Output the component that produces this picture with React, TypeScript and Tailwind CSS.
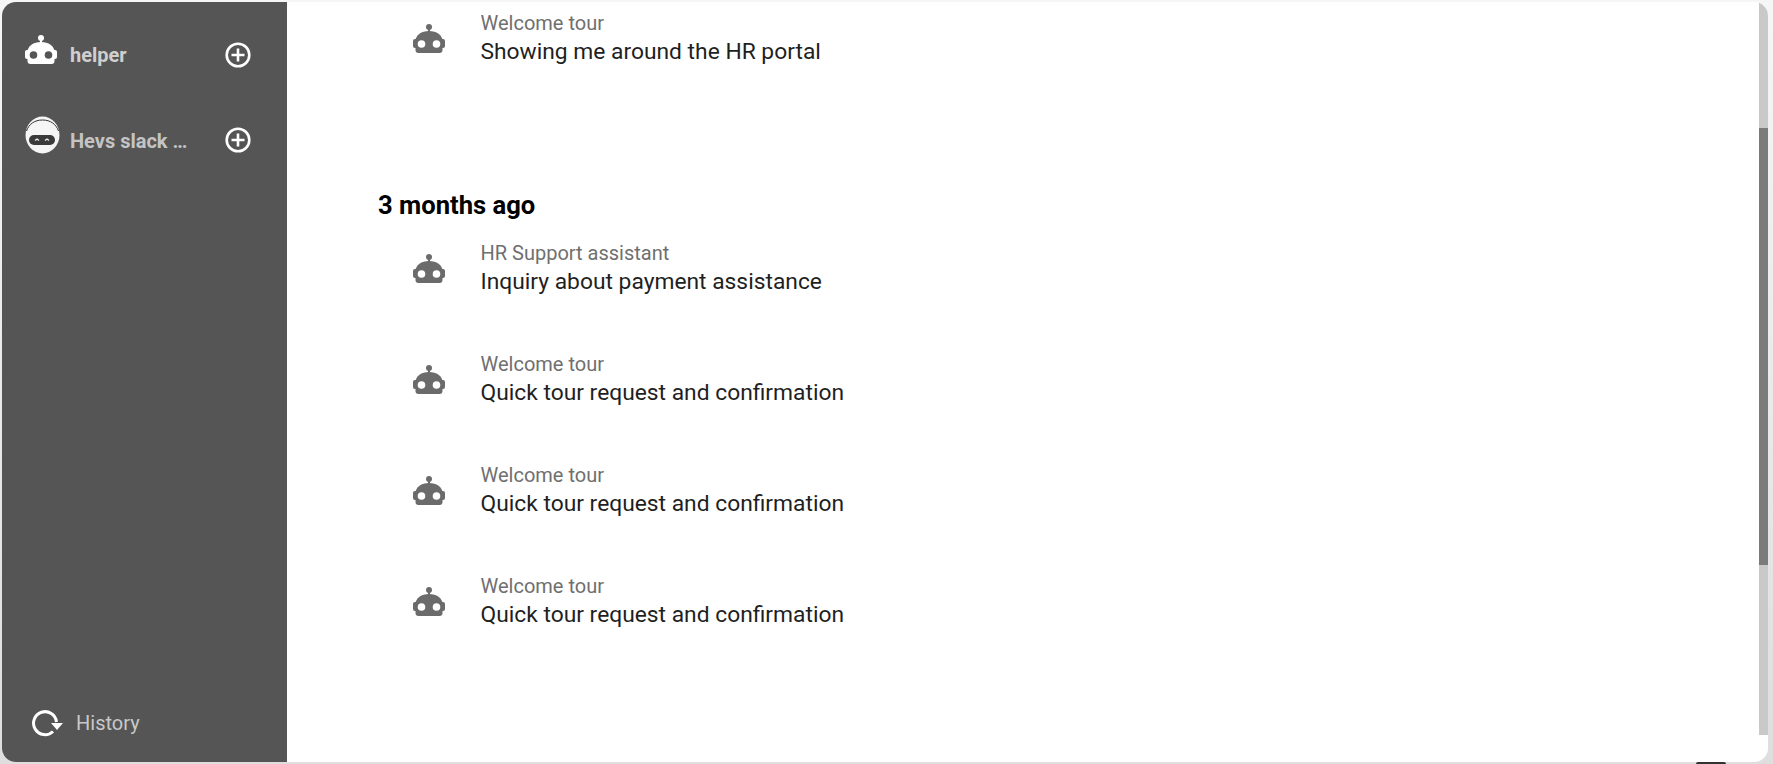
import React from "react";

function BotIcon({ className, eye }: { className: string; eye: string }) {
  return (
    <svg viewBox="0 0 32 29" className={className} fill="currentColor">
      <circle cx="16" cy="3" r="3" />
      <rect x="15" y="4" width="2" height="5" />
      <path d="M2.500 17C2.500 11 8.500 7 16 7S29.500 11 29.500 17V26C29.500 28 28.500 29 26.500 29H5.500C3.500 29 2.500 28 2.500 26Z" />
      <rect x="0" y="15" width="5" height="9" rx="2" />
      <rect x="27" y="15" width="5" height="9" rx="2" />
      <circle cx="8.500" cy="20" r="3.800" fill={eye} />
      <circle cx="23.500" cy="20" r="3.800" fill={eye} />
    </svg>
  );
}

function MaskIcon() {
  return (
    <svg viewBox="0 0 35 38" className="w-[35px] h-[38px]">
      <ellipse cx="17.500" cy="19" rx="17" ry="18.500" fill="#f5f5f5" />
      <path d="M1.500 15C4 8 9.500 4 17.500 4S31 8 33.500 15" fill="none" stroke="#333" strokeWidth="1" />
      <rect x="4" y="19" width="26" height="10" rx="5" fill="#3a3a3a" />
      <path d="M10 24.500L12 23L14 24.500M20 24.500L22 23L24 24.500" fill="none" stroke="#eee" strokeWidth="1.200" />
    </svg>
  );
}

function PlusIcon() {
  return (
    <svg viewBox="0 0 26 26" className="w-[26px] h-[26px]" fill="none" stroke="white" strokeWidth="2.600">
      <circle cx="13" cy="13" r="11.300" />
      <path d="M13 6.500V19.500M6.500 13H19.500" />
    </svg>
  );
}

function HistoryIcon() {
  return (
    <svg viewBox="0 0 32 28" className="w-[32px] h-[28px]">
      <path d="M21 22.500A11.500 11.500 0 1 1 24.500 13" fill="none" stroke="white" strokeWidth="3" />
      <path d="M19 14H31L25 21Z" fill="white" />
    </svg>
  );
}

function ChatRow({ source, title }: { source: string; title: string }) {
  return (
    <div className="flex items-center h-[111px] pl-[35px]">
      <div className="w-[32px] mr-[35.500px] text-[#6b6b6b]">
        <BotIcon className="w-[32px] h-[29px]" eye="#ffffff" />
      </div>
      <div>
        <p className="text-[20px] leading-[26px] text-[#6f6f6f]">{source}</p>
        <p className="text-[22.8px] leading-[32px] text-[#1f1f1f]">{title}</p>
      </div>
    </div>
  );
}

export default function App() {
  const rows = [
    { source: "HR Support assistant", title: "Inquiry about payment assistance" },
    { source: "Welcome tour", title: "Quick tour request and confirmation" },
    { source: "Welcome tour", title: "Quick tour request and confirmation" },
    { source: "Welcome tour", title: "Quick tour request and confirmation" },
  ];

  return (
    <div
      className="relative h-[764px] w-[1773px] bg-gradient-to-b from-[#f6f6f6] to-[#dedede] pt-[2px] pb-[2px] pl-[2px] pr-[5px] overflow-hidden"
      style={{ fontFamily: "Roboto, sans-serif" }}
    >
      <div className="flex h-full rounded-[14px] overflow-hidden bg-white">
        {/* Sidebar */}
        <aside className="w-[285px] bg-[#555555] flex flex-col pl-[23px] pr-[36px] pt-[37px] pb-[24px]">
          <div className="flex items-center h-[32px] mb-[49px]">
            <div className="w-[35px] mr-[10px] mb-[11px] text-white">
              <BotIcon className="w-[32px] h-[29px]" eye="#555555" />
            </div>
            <span className="flex-1 text-[20px] font-bold text-[#cfcfcf]">helper</span>
            <PlusIcon />
          </div>
          <div className="flex items-center h-[40px]">
            <div className="w-[35px] mr-[10px] mb-[11px]">
              <MaskIcon />
            </div>
            <span className="flex-1 text-[20px] font-bold text-[#c4c4c4] pt-[2px] whitespace-nowrap">Hevs slack …</span>
            <PlusIcon />
          </div>
          <div className="mt-auto flex items-center pl-[7px]">
            <HistoryIcon />
            <span className="ml-[12px] text-[20px] text-[#c8c8c8]">History</span>
          </div>
        </aside>

        {/* Conversation list */}
        <main className="flex-1 pl-[91px] overflow-hidden">
          <div className="-mt-[19px]">
            <ChatRow source="Welcome tour" title="Showing me around the HR portal" />
          </div>
          <h2 className="mt-[95px] text-[25.6px] leading-[32px] font-bold text-black">3 months ago</h2>
          <div className="-mt-[8px]">
            {rows.map((row, i) => (
              <ChatRow key={i} source={row.source} title={row.title} />
            ))}
          </div>
        </main>

        {/* Scrollbar */}
        <div className="w-[9px] flex flex-col">
          <div className="h-[733px] bg-[#c9c9c9] flex flex-col pt-[126px]">
            <div className="h-[437px] bg-[#7b7b7b]" />
          </div>
        </div>
      </div>
      {/* bit of the window behind, showing under the panel */}
      <div className="absolute left-[1696px] top-[762px] w-[30px] h-[2px] bg-[#333333] rounded-t-[2px]" />
    </div>
  );
}
